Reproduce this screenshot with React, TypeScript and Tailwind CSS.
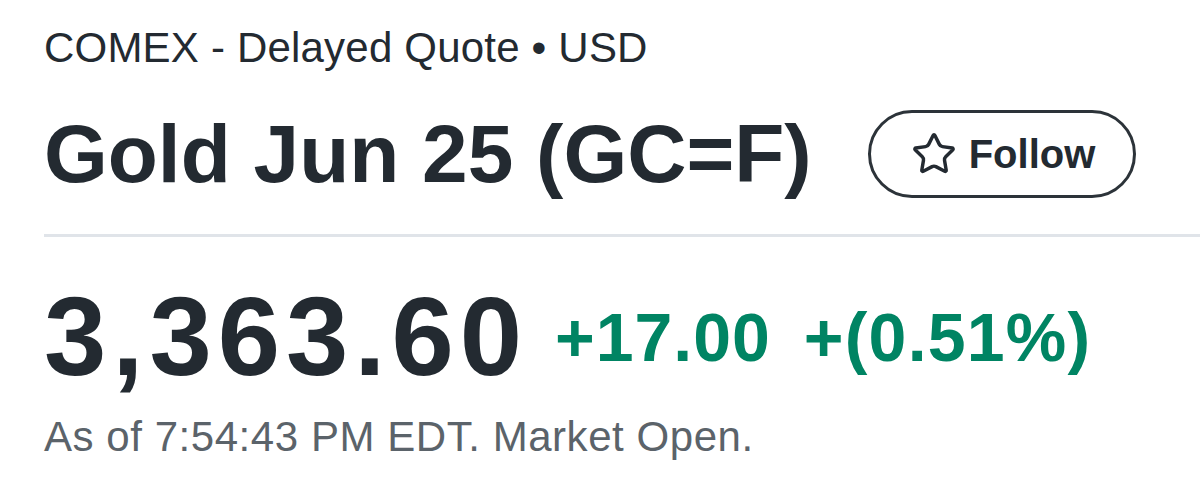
import React from "react";
import { Star } from "lucide-react";

const sans = { fontFamily: '"Liberation Sans", Arial, sans-serif' };

export default function App() {
  return (
    <div
      className="w-[1200px] h-[484px] bg-white overflow-hidden pl-[44px] pt-6 text-[#232a31]"
      style={sans}
    >
      {/* Exchange line */}
      <div className="text-[42px] leading-[48px] tracking-[0.2px] whitespace-nowrap">
        COMEX - Delayed Quote • USD
      </div>

      {/* Title + follow */}
      <div className="mt-[38px] flex items-center h-[88px]">
        <h1 className="text-[82px] leading-[88px] font-bold whitespace-nowrap">
          Gold Jun 25 (GC=F)
        </h1>
        <button className="ml-[56px] h-[88px] flex items-center gap-3 pl-[40px] pr-[38px] rounded-full border-[3px] border-[#2c3339] bg-white">
          <Star size={46} strokeWidth={1.8} className="text-[#232a31]" />
          <span className="text-[40px] font-bold leading-none">Follow</span>
        </button>
      </div>

      {/* Divider */}
      <div className="mt-[36px] h-[3px] bg-[#e0e4e9]" />

      {/* Price row */}
      <div className="mt-[40px] flex items-start h-[120px] whitespace-nowrap">
        <span className="text-[112px] leading-[120px] font-bold tracking-[6px]">
          3,363.60
        </span>
        <span className="ml-[27px] text-[68px] leading-[120px] font-bold tracking-[1px] text-[#008463]">
          +17.00
        </span>
        <span className="ml-[33px] text-[68px] leading-[120px] font-bold tracking-[1.2px] text-[#008463]">
          +(0.51%)
        </span>
      </div>

      {/* Timestamp */}
      <div className="mt-4 text-[42px] leading-[48px] tracking-[0.55px] text-[#5b636a] whitespace-nowrap">
        As of 7:54:43 PM EDT. Market Open.
      </div>
    </div>
  );
}
